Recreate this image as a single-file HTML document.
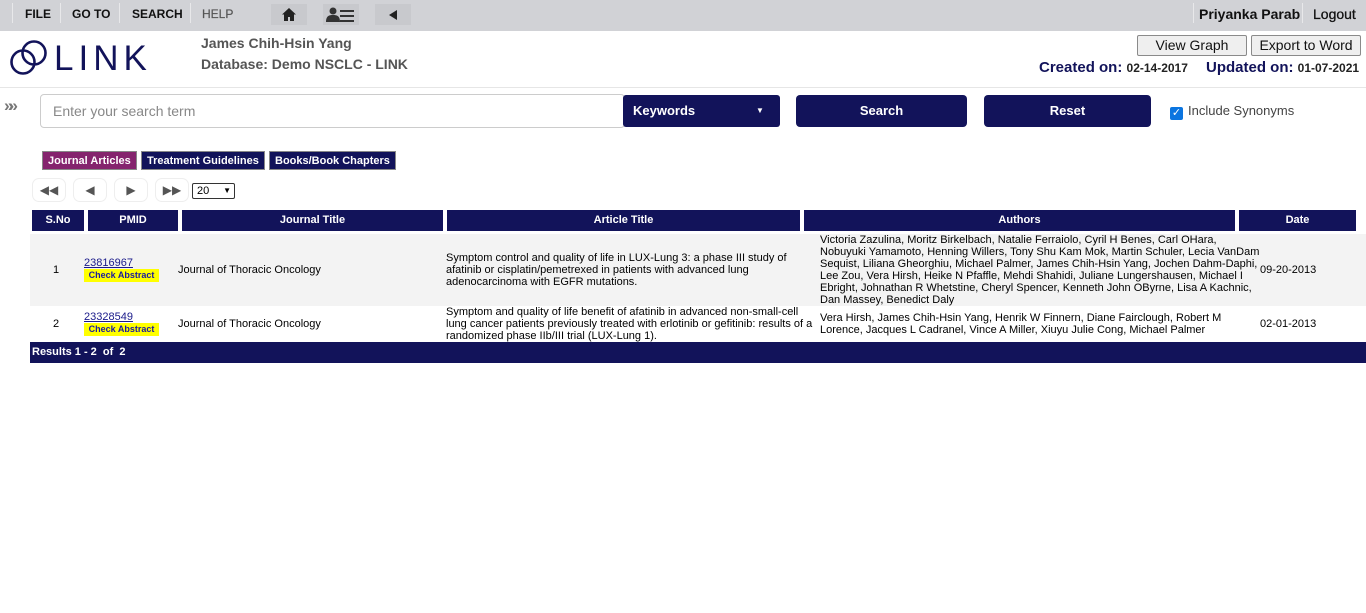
<!DOCTYPE html>
<html><head><meta charset="utf-8"><style>
*{box-sizing:border-box;margin:0;padding:0}
body{width:1366px;height:613px;background:#fff;font-family:"Liberation Sans",Arial,sans-serif;position:relative;overflow:hidden;color:#000}
.a{position:absolute}
.top{left:0;top:0;width:1366px;height:31px;background:#d1d2d6}
.nav{top:0;height:31px;line-height:29px;font-size:12px;font-weight:bold;color:#111}
.sep{top:3px;width:1px;height:20px;background:#e8e8ea}
.ib{top:4px;height:21px;background:#c8c9cd}
.navy{background:#12135a;color:#fff;font-weight:bold}
.th{top:210px;height:21px;line-height:21px;font-size:11px;text-align:center}
.td{font-size:11px;line-height:12px}
.btn{border:1px solid #8a8a8a;background:#efefef;border-radius:2px;font-size:14px;text-align:center;height:21px;line-height:19px;color:#111}
.pg{top:178px;width:34px;height:24px;background:#fff;border:1px solid #eee;border-radius:7px;text-align:center;line-height:22px;font-size:12px;color:#555}
.tab{top:151px;height:19px;line-height:19px;font-size:11px;font-weight:bold;color:#fff;border:1px solid #888;padding:0 5px}
.ck{background:#ffff00;color:#1a1aa0;font-size:9px;font-weight:bold;width:75px;height:13px;line-height:13px;text-align:center}
a{color:#1a1a8a;text-decoration:underline}
</style></head><body>
<div class="a top"></div>
<div class="a sep" style="left:12px"></div>
<div class="a nav" style="left:25px">FILE</div>
<div class="a sep" style="left:60px"></div>
<div class="a nav" style="left:72px">GO TO</div>
<div class="a sep" style="left:119px"></div>
<div class="a nav" style="left:132px">SEARCH</div>
<div class="a sep" style="left:190px"></div>
<div class="a nav" style="left:202px;color:#555;font-weight:normal;-webkit-text-stroke:.2px #555">HELP</div>
<div class="a ib" style="left:271px;width:36px"></div>
<svg class="a" style="left:282px;top:8px" width="14" height="13" viewBox="0 0 14 13"><path d="M7 0L0 6.5h2V13h4V9h2v4h4V6.5h2z" fill="#222"/></svg>
<div class="a ib" style="left:323px;width:36px"></div>
<svg class="a" style="left:326px;top:7px" width="30" height="16" viewBox="0 0 30 16"><circle cx="7" cy="4" r="3.5" fill="#333"/><path d="M0 15c0-6 3-7 7-7s7 1 7 7z" fill="#333"/><rect x="14" y="3" width="14" height="2" fill="#333"/><rect x="14" y="8" width="14" height="2" fill="#333"/><rect x="14" y="13" width="14" height="2" fill="#333"/></svg>
<div class="a ib" style="left:375px;width:36px"></div>
<svg class="a" style="left:389px;top:10px" width="9" height="10"><path d="M8 0L0 5l8 5z" fill="#222"/></svg>
<div class="a sep" style="left:1193px"></div>
<div class="a nav" style="left:1199px;font-size:14px">Priyanka Parab</div>
<div class="a sep" style="left:1302px"></div>
<div class="a nav" style="left:1313px;font-size:14px;font-weight:normal;-webkit-text-stroke:.3px #111">Logout</div>

<svg class="a" style="left:9px;top:40px" width="38" height="36" viewBox="0 0 38 36"><circle cx="14" cy="22" r="11.5" fill="none" stroke="#12135a" stroke-width="2.6"/><circle cx="25" cy="13" r="11.5" fill="none" stroke="#12135a" stroke-width="2.6"/></svg>
<div class="a" style="left:54px;top:38px;font-size:35px;color:#12135a;letter-spacing:5px;line-height:42px">LINK</div>
<div class="a" style="left:201px;top:35px;font-size:14px;font-weight:bold;color:#555">James Chih-Hsin Yang</div>
<div class="a" style="left:201px;top:56px;font-size:14px;font-weight:bold;color:#555">Database: Demo NSCLC - LINK</div>
<div class="a btn" style="left:1137px;top:35px;width:110px">View Graph</div>
<div class="a btn" style="left:1251px;top:35px;width:110px">Export to Word</div>
<div class="a" style="left:1039px;top:59px;font-size:15px;font-weight:bold;color:#12135a">Created on: <span style="font-size:12px;color:#222">02-14-2017</span></div>
<div class="a" style="left:1206px;top:59px;font-size:15px;font-weight:bold;color:#12135a">Updated on: <span style="font-size:12px;color:#222">01-07-2021</span></div>
<div class="a" style="left:0;top:87px;width:1366px;height:1px;background:#e6e6e6"></div>

<div class="a" style="left:4px;top:96px;font-size:17px;color:#777;font-weight:bold;letter-spacing:-5px">»»</div>
<div class="a" style="left:40px;top:94px;width:585px;height:34px;border:1px solid #ccc;border-radius:4px;font-size:14px;color:#888;line-height:32px;padding-left:12px">Enter your search term</div>
<div class="a navy" style="left:623px;top:95px;width:157px;height:32px;border-radius:3px;font-size:13px;line-height:32px;padding-left:10px">Keywords<span style="position:absolute;left:133px;top:0;font-size:8px">▼</span></div>
<div class="a navy" style="left:796px;top:95px;width:171px;height:32px;border-radius:4px;font-size:13px;line-height:32px;text-align:center">Search</div>
<div class="a navy" style="left:984px;top:95px;width:167px;height:32px;border-radius:4px;font-size:13px;line-height:32px;text-align:center">Reset</div>
<div class="a" style="left:1170px;top:107px;width:13px;height:13px;background:#0b75e0;border-radius:2px;color:#fff;font-size:11px;line-height:13px;text-align:center">✓</div>
<div class="a" style="left:1188px;top:103px;font-size:13px;color:#444">Include Synonyms</div>

<div class="a tab" style="left:42px;background:#85246e">Journal Articles</div>
<div class="a tab" style="left:141px;background:#12135a">Treatment Guidelines</div>
<div class="a tab" style="left:269px;background:#12135a">Books/Book Chapters</div>
<div class="a pg" style="left:32px">◀◀</div>
<div class="a pg" style="left:73px">◀</div>
<div class="a pg" style="left:114px">▶</div>
<div class="a pg" style="left:155px">▶▶</div>
<div class="a" style="left:192px;top:183px;width:43px;height:16px;border:1px solid #333;border-radius:2px;font-size:11px;line-height:14px;padding-left:4px">20<span style="position:absolute;right:3px;font-size:8px">▼</span></div>

<div class="a navy th" style="left:32px;width:52px">S.No</div>
<div class="a navy th" style="left:88px;width:90px">PMID</div>
<div class="a navy th" style="left:182px;width:261px">Journal Title</div>
<div class="a navy th" style="left:447px;width:353px">Article Title</div>
<div class="a navy th" style="left:804px;width:431px">Authors</div>
<div class="a navy th" style="left:1239px;width:117px">Date</div>

<div class="a" style="left:30px;top:234px;width:1336px;height:72px;background:#f3f3f3"></div>
<div class="a td" style="left:53px;top:264px">1</div>
<div class="a td" style="left:84px;top:257px"><a>23816967</a></div>
<div class="a ck" style="left:84px;top:269px">Check Abstract</div>
<div class="a td" style="left:178px;top:264px">Journal of Thoracic Oncology</div>
<div class="a td" style="left:446px;top:252px;width:360px">Symptom control and quality of life in LUX-Lung 3: a phase III study of afatinib or cisplatin/pemetrexed in patients with advanced lung adenocarcinoma with EGFR mutations.</div>
<div class="a td" style="left:820px;top:234px;width:440px">Victoria Zazulina, Moritz Birkelbach, Natalie Ferraiolo, Cyril H Benes, Carl OHara, Nobuyuki Yamamoto, Henning Willers, Tony Shu Kam Mok, Martin Schuler, Lecia VanDam Sequist, Liliana Gheorghiu, Michael Palmer, James Chih-Hsin Yang, Jochen Dahm-Daphi, Lee Zou, Vera Hirsh, Heike N Pfaffle, Mehdi Shahidi, Juliane Lungershausen, Michael I Ebright, Johnathan R Whetstine, Cheryl Spencer, Kenneth John OByrne, Lisa A Kachnic, Dan Massey, Benedict Daly</div>
<div class="a td" style="left:1260px;top:264px">09-20-2013</div>

<div class="a td" style="left:53px;top:318px">2</div>
<div class="a td" style="left:84px;top:311px"><a>23328549</a></div>
<div class="a ck" style="left:84px;top:323px">Check Abstract</div>
<div class="a td" style="left:178px;top:318px">Journal of Thoracic Oncology</div>
<div class="a td" style="left:446px;top:306px;width:372px">Symptom and quality of life benefit of afatinib in advanced non-small-cell lung cancer patients previously treated with erlotinib or gefitinib: results of a randomized phase IIb/III trial (LUX-Lung 1).</div>
<div class="a td" style="left:820px;top:312px;width:420px">Vera Hirsh, James Chih-Hsin Yang, Henrik W Finnern, Diane Fairclough, Robert M Lorence, Jacques L Cadranel, Vince A Miller, Xiuyu Julie Cong, Michael Palmer</div>
<div class="a td" style="left:1260px;top:318px">02-01-2013</div>

<div class="a navy" style="left:30px;top:342px;width:1336px;height:21px;font-size:11px;line-height:21px;padding-left:2px">Results 1 - 2&nbsp; of&nbsp; 2</div>
</body></html>
